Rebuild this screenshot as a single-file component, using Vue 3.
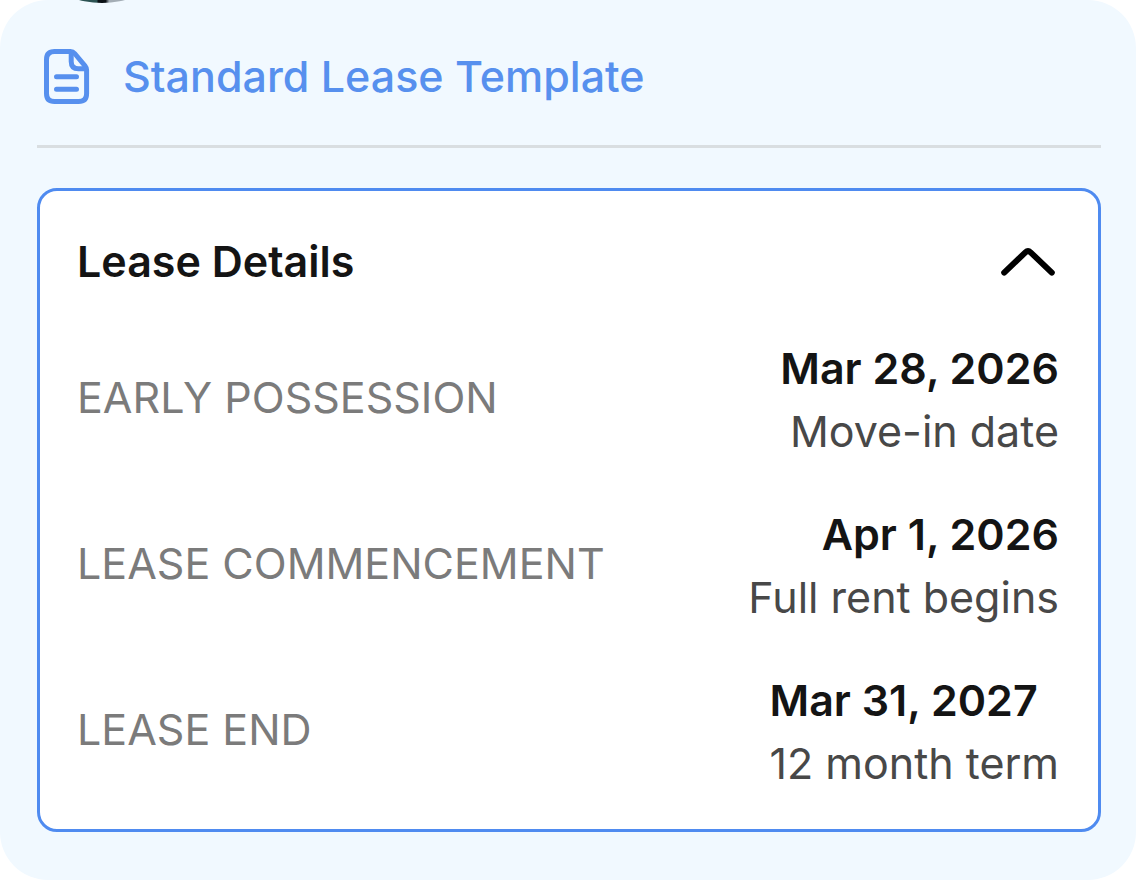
<script setup>
import { ref } from 'vue'

const open = ref(true)

const rows = [
  { label: 'EARLY POSSESSION', date: 'Mar 28, 2026', note: 'Move-in date' },
  { label: 'LEASE COMMENCEMENT', date: 'Apr 1, 2026', note: 'Full rent begins' },
  { label: 'LEASE END', date: 'Mar 31, 2027', note: '12 month term', start: true },
]
</script>

<template>
  <main class="card">
    <span class="avatar" aria-hidden="true"></span>

    <header class="head">
      <svg class="doc" viewBox="0 0 46 56" fill="none" aria-hidden="true">
        <path
          d="M10 2.5H26.5Q29 2.5 30.7 4.5L41 16.8Q42.6 18.7 42.6 21V44.5Q42.6 52.5 34.6 52.5H10.5Q2.5 52.5 2.5 44.5V10.5Q2.5 2.5 10.5 2.5Z"
        />
        <path d="M27.2 3V12.5Q27.2 19.8 34.5 19.8H42" />
        <path class="rule" d="M12.5 27.8H32.5M12.5 40.2H32.5" />
      </svg>
      <a class="title" href="#lease">Standard Lease Template</a>
    </header>

    <section id="lease" class="panel">
      <div class="bar">
        <h2 id="lease-heading">Lease Details</h2>
        <button
          type="button"
          class="toggle"
          aria-labelledby="lease-heading"
          :aria-expanded="open"
          @click="open = !open"
        >
          <svg class="chevron" :class="{ closed: !open }" viewBox="0 0 54 28" fill="none" aria-hidden="true">
            <path d="M3.2 24.6L24.4 4.4Q27 2 29.6 4.4L50.8 24.6" />
          </svg>
        </button>
      </div>

      <dl v-show="open" class="rows">
        <div v-for="row in rows" :key="row.label" class="row">
          <dt>{{ row.label }}</dt>
          <dd :class="{ start: row.start }">
            <strong>{{ row.date }}</strong>
            <span>{{ row.note }}</span>
          </dd>
        </div>
      </dl>
    </section>
  </main>
</template>

<style>
body {
  background: #fff;
}
</style>

<style scoped>
.card {
  position: relative;
  overflow: hidden;
  padding: 0 35px 48px 37px;
  border-radius: 48px;
  background: #f1f9ff;
  font-family: Inter, "Liberation Sans", sans-serif;
  font-size: 43px;
  line-height: 63px;
}

.avatar {
  position: absolute;
  top: -177px;
  left: 12px;
  width: 180px;
  height: 180px;
  border-radius: 50%;
  background: linear-gradient(90deg, #2c5353 47%, #0b1116 48%, #0b1116 52%, #a3adb5 54%);
}

.head {
  display: flex;
  align-items: center;
  gap: 33px;
  padding: 45px 7px 37px;
  border-bottom: 3px solid #d9dee1;
}

.doc {
  flex: none;
  width: 46px;
  height: 56px;
  stroke: #5790ee;
  stroke-width: 5;
  stroke-linejoin: round;
}

.rule {
  stroke-linecap: round;
}

.title {
  color: #5790ee;
  font-weight: 500;
  text-decoration: none;
}

.panel {
  margin-top: 40px;
  padding: 39px 39px 34px 37px;
  border: 3px solid #4f8bf0;
  border-radius: 20px;
  background: #fff;
}

.bar {
  display: flex;
  align-items: center;
  justify-content: space-between;
}

h2 {
  margin: 0;
  color: #141414;
  font-size: 43px;
  font-weight: 600;
}

.toggle {
  display: flex;
  padding: 4px;
  border: 0;
  background: none;
  cursor: pointer;
}

.chevron {
  width: 54px;
  height: 28px;
  stroke: #000;
  stroke-width: 6;
  stroke-linecap: round;
}

.chevron.closed {
  transform: rotate(180deg);
}

.rows {
  display: grid;
  gap: 40px;
  margin: 44px 0 0;
}

.row {
  display: flex;
  align-items: center;
  justify-content: space-between;
}

dt {
  padding-bottom: 6px;
  color: #7b7b7b;
}

dd {
  display: grid;
  margin: 0;
  color: #484848;
  text-align: right;
}

dd.start {
  text-align: left;
}

strong {
  color: #141414;
  font-weight: 600;
}
</style>
